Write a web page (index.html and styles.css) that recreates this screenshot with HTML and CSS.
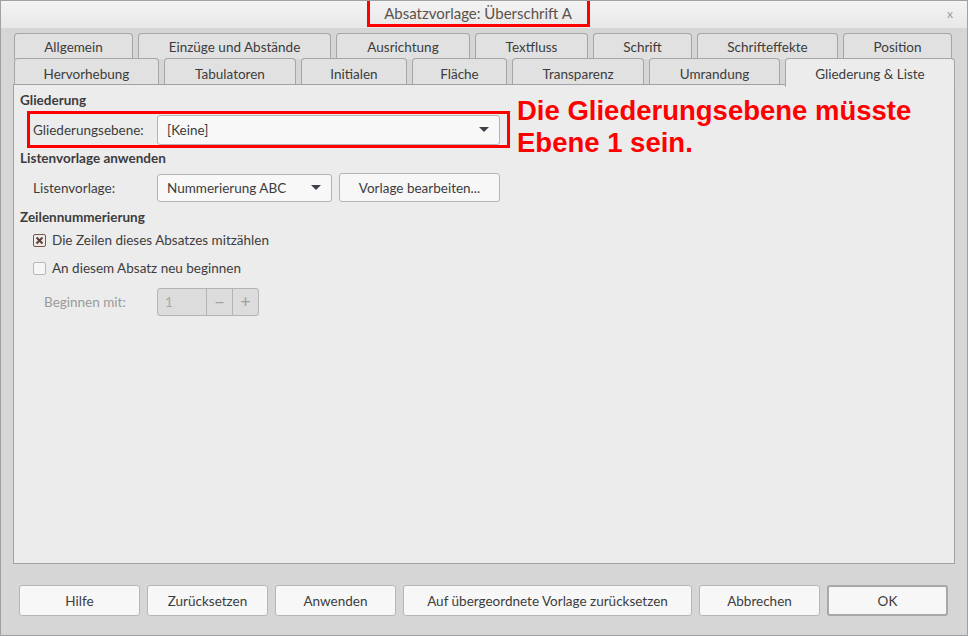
FILE: index.html
```html
<!DOCTYPE html>
<html>
<head>
    <title>Absatzvorlage: Überschrift A</title>
    <link rel="stylesheet" href="styles.css">
</head>
<body>

<div class="window">
    <div class="titlebar">
        <span class="title">Absatzvorlage: Überschrift A</span>
        <span class="close">x</span>
    </div>

    <div class="tabs">
        <div class="tab-row row-1">
            <div class="tab">Allgemein</div>
            <div class="tab">Einzüge und Abstände</div>
            <div class="tab">Ausrichtung</div>
            <div class="tab">Textfluss</div>
            <div class="tab">Schrift</div>
            <div class="tab">Schrifteffekte</div>
            <div class="tab">Position</div>
        </div>
        <div class="tab-row row-2">
            <div class="tab">Hervorhebung</div>
            <div class="tab">Tabulatoren</div>
            <div class="tab">Initialen</div>
            <div class="tab">Fläche</div>
            <div class="tab">Transparenz</div>
            <div class="tab">Umrandung</div>
            <div class="tab active">Gliederung &amp; Liste</div>
        </div>
    </div>

    <div class="panel">
        <div class="heading">Gliederung</div>
        <div class="row marked">
            <label class="label">Gliederungsebene:</label>
            <div class="combo wide">
                <span>[Keine]</span>
                <span class="arrow"></span>
            </div>
        </div>

        <div class="heading">Listenvorlage anwenden</div>
        <div class="row list">
            <label class="label">Listenvorlage:</label>
            <div class="combo narrow">
                <span>Nummerierung ABC</span>
                <span class="arrow"></span>
            </div>
            <div class="button edit">Vorlage bearbeiten...</div>
        </div>

        <div class="heading numbering">Zeilennummerierung</div>
        <div class="check">
            <span class="box checked">
                <svg width="9" height="9" viewBox="0 0 9 9"><path d="M1.5 1.5 L7.5 7.5 M7.5 1.5 L1.5 7.5" stroke="#5a4036" stroke-width="2"/></svg>
            </span>
            <span>Die Zeilen dieses Absatzes mitzählen</span>
        </div>
        <div class="check">
            <span class="box"></span>
            <span>An diesem Absatz neu beginnen</span>
        </div>
        <div class="row start">
            <label class="label muted">Beginnen mit:</label>
            <div class="spin">
                <span class="spin-value">1</span>
                <span class="spin-btn">&minus;</span>
                <span class="spin-btn">+</span>
            </div>
        </div>

        <div class="note">Die Gliederungsebene müsste<br>Ebene 1 sein.</div>
    </div>

    <div class="buttons">
        <div class="button">Hilfe</div>
        <div class="button">Zurücksetzen</div>
        <div class="button">Anwenden</div>
        <div class="button long">Auf übergeordnete Vorlage zurücksetzen</div>
        <div class="button">Abbrechen</div>
        <div class="button default">OK</div>
    </div>
</div>

</body>
</html>
```

FILE: styles.css
```css
body {
    margin: 0;
    font-family: Lato, "Noto Sans", sans-serif;
    font-size: 13.5px;
    color: #3c3c3c;
}

.window {
    width: 968px;
    height: 636px;
    box-sizing: border-box;
    border: 1px solid #9ea2a4;
    background-color: #d6d6d6;
    position: relative;
}

.titlebar {
    height: 27px;
    background: linear-gradient(#f3f3f3, #e8e8e8);
    display: flex;
    align-items: flex-start;
    justify-content: center;
    position: relative;
}

.title {
    display: inline-block;
    width: 217px;
    height: 23px;
    line-height: 24px;
    margin-left: -12px;
    text-align: center;
    border: 3px solid #ff0000;
    border-top: none;
    color: #5c524d;
    font-size: 15px;
}

.close {
    position: absolute;
    right: 14px;
    top: 5px;
    color: #9a9a9a;
    font-size: 12px;
}

/* tabs */

.tabs {
    margin: 5px 0 0 13px;
}

.tab-row {
    display: grid;
    column-gap: 5px;
    height: 26px;
}

.row-1 {
    grid-template-columns: 119px 193px 134px 113px 99px 141px 109px;
}

.row-2 {
    grid-template-columns: 145px 132px 106px 95px 132px 131px 170px;
    margin-top: -1px;
}

.tab {
    background-color: #e1e1e1;
    border: 1px solid #a3a5a6;
    border-bottom: none;
    border-radius: 4px 4px 0 0;
    display: flex;
    align-items: center;
    justify-content: center;
    padding-top: 1px;
}

.tab.active {
    background-color: #ececec;
    height: 27px;
    position: relative;
    z-index: 1;
}

/* content panel */

.panel {
    margin-left: 12px;
    width: 942px;
    height: 480px;
    box-sizing: border-box;
    background-color: #ececec;
    border: 1px solid #9ea2a4;
    padding: 6px 0 0 6px;
    position: relative;
}

.heading {
    font-weight: bold;
    height: 18px;
    line-height: 18px;
}

.heading.numbering {
    margin-top: 2px;
}

.row {
    display: flex;
    align-items: center;
    gap: 7px;
    height: 37px;
}

.row.marked {
    width: 483px;
    box-sizing: border-box;
    border: 3px solid #ff0000;
    margin: 2px 0 1px 7px;
    padding-left: 3px;
    gap: 0;
}

.label {
    width: 124px;
    padding-left: 13px;
    box-sizing: border-box;
}

.marked .label {
    padding-left: 0;
}

.muted {
    color: #9a9a9a;
}

.row.list {
    margin-top: 2px;
}

.combo {
    height: 28px;
    box-sizing: border-box;
    background-color: #f8f8f8;
    border: 1px solid #b4b4b4;
    border-radius: 3px;
    display: flex;
    align-items: center;
    justify-content: space-between;
    padding: 0 10px 0 9px;
}

.combo.wide {
    width: 343px;
    height: 30px;
}

.combo.narrow {
    width: 175px;
    margin-left: 6px;
}

.arrow {
    width: 0;
    height: 0;
    border-left: 5px solid transparent;
    border-right: 5px solid transparent;
    border-top: 5px solid #3c4048;
}

.check {
    display: flex;
    align-items: center;
    gap: 6px;
    height: 28px;
    padding-left: 13px;
}

.box {
    width: 13px;
    height: 13px;
    box-sizing: border-box;
    border: 1px solid #b8b8b8;
    border-radius: 2px;
    background-color: #f6f6f6;
    display: flex;
    align-items: center;
    justify-content: center;
}

.box.checked {
    border-color: #7a5446;
    background-color: #f0ecea;
}

.row.start {
    height: 30px;
    margin-top: 5px;
}

.start .label {
    padding-left: 24px;
}

.spin {
    display: flex;
    height: 28px;
    width: 102px;
    box-sizing: border-box;
    border: 1px solid #b4b4b4;
    border-radius: 3px;
    background-color: #dcdcdc;
    color: #a8a8a8;
    margin-left: 6px;
}

.spin-value {
    width: 49px;
    padding-left: 7px;
    box-sizing: border-box;
    line-height: 26px;
    border-right: 1px solid #b4b4b4;
}

.spin-btn {
    width: 25px;
    text-align: center;
    line-height: 25px;
    font-size: 18px;
    color: #a0a0a0;
}

.spin-btn + .spin-btn {
    border-left: 1px solid #b4b4b4;
}

.note {
    position: absolute;
    left: 503px;
    top: 10px;
    font-family: "Liberation Sans", Arial, sans-serif;
    font-weight: bold;
    font-size: 27.5px;
    line-height: 32px;
    color: #ff0000;
}

/* buttons */

.button {
    height: 31px;
    box-sizing: border-box;
    background-color: #f7f7f7;
    border: 1px solid #b6b6b6;
    border-radius: 3px;
    display: flex;
    align-items: center;
    justify-content: center;
}

.button.edit {
    width: 161px;
    height: 29px;
}

.buttons {
    display: grid;
    grid-template-columns: 121px 121px 121px 289px 121px 121px;
    column-gap: 7px;
    margin: 21px 0 0 18px;
}

.button.default {
    border: 2px solid #a8a8a8;
}
```
